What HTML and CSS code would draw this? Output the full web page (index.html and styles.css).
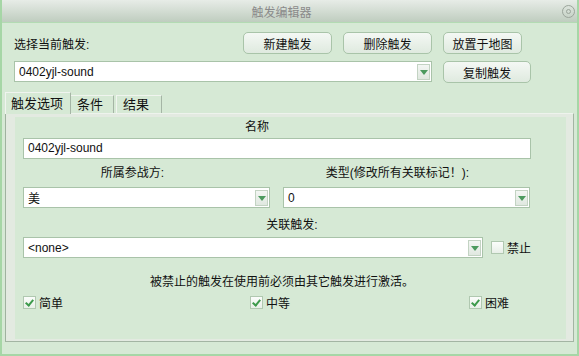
FILE: index.html
```html
<!DOCTYPE html>
<html lang="zh-CN">
<head>
    <meta charset="UTF-8">
    <title>触发编辑器</title>
    <link rel="stylesheet" href="styles.css">
</head>
<body>

    <div class="window">
        <div class="titlebar">
            <span class="title">触发编辑器</span>
            <span class="close-btn"><span class="close-dot"></span></span>
        </div>

        <div class="top-area">
            <div class="row row-first">
                <span class="label-select">选择当前触发:</span>
                <button class="btn btn-new">新建触发</button>
                <button class="btn btn-del">删除触发</button>
                <button class="btn btn-place">放置于地图</button>
            </div>
            <div class="row row-second">
                <div class="combo combo-trigger">
                    <span class="combo-text">0402yjl-sound</span>
                    <span class="combo-arrow"></span>
                </div>
                <button class="btn btn-copy">复制触发</button>
            </div>
        </div>

        <div class="tabs">
            <div class="tab active">触发选项</div>
            <div class="tab">条件</div>
            <div class="tab tab-last">结果</div>
        </div>

        <div class="tab-panel">
            <div class="panel-body">
                <div class="caption caption-name">名称</div>
                <div class="textbox">0402yjl-sound</div>

                <div class="two-col">
                    <div class="caption caption-side">所属参战方:</div>
                    <div class="caption caption-type">类型(修改所有关联标记！):</div>
                    <div class="combo">
                        <span class="combo-text">美</span>
                        <span class="combo-arrow"></span>
                    </div>
                    <div class="combo">
                        <span class="combo-text">0</span>
                        <span class="combo-arrow"></span>
                    </div>
                </div>

                <div class="caption caption-link">关联触发:</div>
                <div class="link-row">
                    <div class="combo combo-link">
                        <span class="combo-text">&lt;none&gt;</span>
                        <span class="combo-arrow"></span>
                    </div>
                    <label class="check">
                        <span class="box"></span>禁止
                    </label>
                </div>

                <div class="notice">被禁止的触发在使用前必须由其它触发进行激活。</div>

                <div class="levels">
                    <label class="check"><span class="box checked"></span>简单</label>
                    <label class="check"><span class="box checked"></span>中等</label>
                    <label class="check"><span class="box checked"></span>困难</label>
                </div>
            </div>
        </div>
    </div>

</body>
</html>
```

FILE: styles.css
```css
body {
    margin: 0;
    font-family: "Liberation Sans", "Noto Sans CJK SC", sans-serif;
    font-size: 12px;
    color: #111;
    background-color: #d6e9d5;
}
.window {
    width: 579px;
    height: 356px;
    box-sizing: border-box;
    border: 2px solid #a6d6a6;
    border-top: none;
    background-color: #d6e9d5;
}
.titlebar {
    height: 22px;
    display: flex;
    align-items: center;
    justify-content: center;
    position: relative;
    background: linear-gradient(#e7ece7, #bfcdbf);
    border-bottom: 1px solid #b3dbb3;
    padding-right: 16px;
}
.title {
    color: #8a8a8a;
    font-size: 12px;
}
.close-btn {
    position: absolute;
    right: 2px;
    top: 5px;
    width: 11px;
    height: 11px;
    border: 1px solid #9ba59b;
    border-radius: 50%;
    display: flex;
    align-items: center;
    justify-content: center;
}
.close-dot {
    width: 3px;
    height: 3px;
    border: 1px solid #9ba59b;
    border-radius: 50%;
}

/* top area */
.top-area {
    padding: 9px 0 0 12px;
}
.row {
    display: flex;
    align-items: center;
}
.label-select {
    width: 229px;
}
.btn {
    font-family: inherit;
    font-size: 12px;
    color: #111;
    height: 22px;
    padding: 0;
    border: 1px solid #a9c4a9;
    border-radius: 5px;
    background: linear-gradient(#f4f8f4, #dfeadf);
    margin-right: 11px;
}
.btn-new, .btn-del {
    width: 89px;
}
.btn-place {
    width: 79px;
}
.row-second {
    margin-top: 6px;
}
.btn-copy {
    width: 88px;
    margin-top: 1px;
}

.combo {
    height: 21px;
    box-sizing: border-box;
    display: flex;
    align-items: center;
    background-color: #fff;
    border: 1px solid #a9c3a9;
    padding: 0 1px 0 4px;
}
.combo-trigger {
    width: 418px;
    margin-right: 11px;
}
.combo-text {
    flex: 1;
}
.combo-arrow {
    width: 13px;
    height: 16px;
    box-sizing: border-box;
    border: 1px solid #c3d3c3;
    background: linear-gradient(#f3f6f3, #e0e8e0);
    position: relative;
}
.combo-arrow::after {
    content: "";
    position: absolute;
    left: 2px;
    top: 5px;
    border-left: 4px solid transparent;
    border-right: 4px solid transparent;
    border-top: 5px solid #4c9a5e;
}

/* tabs */
.tabs {
    display: flex;
    align-items: flex-end;
    margin: 8px 0 0 3px;
    height: 22px;
}
.tab {
    height: 17px;
    line-height: 17px;
    padding: 0 10px 0 6px;
    border: 1px solid #a5b5a5;
    border-bottom: none;
    border-top-color: #f0f4ef;
    border-left-color: #f0f4ef;
    background-color: #d6e9d5;
    margin-right: -1px;
    font-size: 13px;
}
.tab.active {
    height: 21px;
    line-height: 21px;
    padding: 0 7px 0 5px;
    position: relative;
    z-index: 1;
    margin-bottom: -1px;
    background-color: #d6e9d5;
}
.tab-last {
    margin-left: 3px;
    padding-right: 12px;
}

/* panel */
.tab-panel {
    margin: 0 3px;
    border: 1px solid #a3b5a3;
    border-top-color: #eef3ed;
    border-left-color: #9fb39f;
    height: 229px;
    box-sizing: border-box;
}
.panel-body {
    height: 100%;
    box-sizing: border-box;
    border-style: solid;
    border-color: #e3eae1;
    border-width: 3px 7px 2px 9px;
    padding: 1px 35px 0 8px;
}
.caption {
    height: 18px;
    line-height: 18px;
    text-align: center;
}
.caption-name {
    padding-right: 40px;
}
.textbox {
    height: 21px;
    line-height: 19px;
    box-sizing: border-box;
    background-color: #fff;
    border: 1px solid #a9c3a9;
    padding: 0 4px;
    margin-top: 2px;
}
.two-col {
    display: grid;
    grid-template-columns: 247px 247px;
    column-gap: 13px;
    row-gap: 5px;
    margin-top: 5px;
}
.caption-side {
    padding-right: 28px;
}
.caption-type {
    padding-right: 18px;
}
.caption-link {
    margin-top: 8px;
    padding-left: 30px;
}
.link-row {
    display: flex;
    align-items: center;
    margin-top: 3px;
}
.combo-link {
    width: 477px;
    margin-right: 8px;
}
.check {
    display: flex;
    align-items: center;
    white-space: nowrap;
}
.box {
    width: 13px;
    height: 13px;
    box-sizing: border-box;
    border: 1px solid #b0c8b0;
    background: linear-gradient(#fbfdfb, #e8efe8);
    margin-right: 3px;
    position: relative;
}
.box.checked::after {
    content: "";
    position: absolute;
    left: 3px;
    top: 1px;
    width: 3px;
    height: 6px;
    border: solid #3d9a4c;
    border-width: 0 2px 2px 0;
    transform: rotate(40deg);
}
.notice {
    text-align: center;
    margin-top: 15px;
    padding-left: 10px;
    height: 18px;
    line-height: 18px;
}
.levels {
    display: grid;
    grid-template-columns: 227px 219px auto;
    margin-top: 3px;
}
```
